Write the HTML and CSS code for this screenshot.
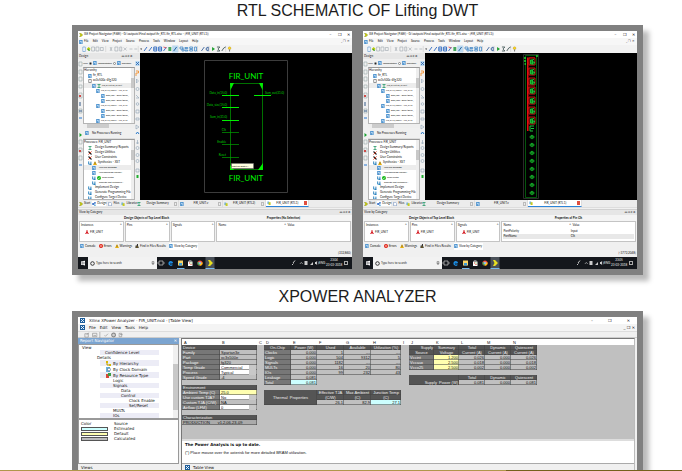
FILE: index.html
```html
<!DOCTYPE html>
<html lang="en">
<head>
<meta charset="utf-8">
<title>RTL Schematic of Lifting DWT</title>
<link rel="stylesheet" href="styles.css">
</head>
<body>
<svg class="defs" aria-hidden="true">
  <symbol id="doc" viewBox="0 0 4 4"><path d="M.3 0h3.200v4H.3z" fill="#2f7fc4"/><path d="M1 .7h1.800v1H1zM1.600 2.200h1.200v1.200H1.600z" fill="#dcefff"/></symbol>
  <symbol id="page" viewBox="0 0 4 4"><path d="M.6.3h2l1 1v2.500h-3z" fill="#fff" stroke="#5578b0" stroke-width=".5"/></symbol>
  <symbol id="net" viewBox="0 0 4 4"><path d="M1 2l2-1.200M1 2l2 1.300" stroke="#2858a8" stroke-width=".6"/><circle cx="1" cy="2" r=".9" fill="#2868c8"/><circle cx="3" cy=".9" r=".8" fill="#2868c8"/><circle cx="3" cy="3.200" r=".8" fill="#48a8d8"/></symbol>
  <symbol id="chip" viewBox="0 0 4 4"><path d="M.7.5h2.600v3H.7z" fill="#fff" stroke="#555" stroke-width=".6"/></symbol>
  <symbol id="sum" viewBox="0 0 4 4"><path d="M.5.5h3M.5 3.500h3M2 .5v3" stroke="#2a9a6a" stroke-width=".8"/></symbol>
  <symbol id="tool" viewBox="0 0 4 4"><path d="M.5.5l3 3" stroke="#222" stroke-width="1.100"/><path d="M3.500.5l-3 3" stroke="#d8442a"/></symbol>
  <symbol id="cycle" viewBox="0 0 4 4"><path d="M.7.4v2.800h2.200V.6M2 3.400h1.600" fill="none" stroke="#1878b8" stroke-width=".9"/></symbol>
  <symbol id="warn" viewBox="0 0 4 4"><path d="M2 0l2 4H0z" fill="#e8b010"/><path d="M2 1.200v1.500" stroke="#333" stroke-width=".6"/></symbol>
  <symbol id="ok" viewBox="0 0 4 4"><circle cx="2" cy="2" r="2" fill="#18b818"/><path d="M1 2l.8.8L3 1.200" stroke="#fff" stroke-width=".5" fill="none"/></symbol>
  <symbol id="err" viewBox="0 0 4 4"><circle cx="2" cy="2" r="2" fill="#e01c10"/><path d="M1.300 1.300l1.400 1.400M2.700 1.300L1.300 2.700" stroke="#fff" stroke-width=".6"/></symbol>
  <symbol id="arrow" viewBox="0 0 4 4"><path d="M.4.2h1.400L3.800 2 1.800 3.800H.4L1.600 2z" fill="#cdd000" stroke="#55600a" stroke-width=".3"/></symbol>
  <symbol id="red" viewBox="0 0 4 4"><path d="M1.400.2h1.200v1.600L3.900 4H2.800L2 2.900 1.200 4H.1l1.300-2.200z" fill="#d4141c"/></symbol>
  <symbol id="lib" viewBox="0 0 4 4"><path d="M.4.5h1.800v2.600H.4z" fill="#6ab0e0"/><path d="M1.600 1.200h2V4h-2z" fill="#c8cc20"/></symbol>
  <symbol id="find" viewBox="0 0 4 4"><path d="M.6 1.500h1.200L2 0h1v1.500l.8 2.500H.4z" fill="#333"/><path d="M1.500 2.500h1v1h-1z" fill="#e8b010"/></symbol>
  <symbol id="toolbar" viewBox="0 0 176 8" preserveAspectRatio="none">
    <path d="M14 2h3v4h-3zM18.500 2h3v4h-3zM23 2.500h3v3h-3zM33 2l2 4M35 2l-2 4M38 2h3v4h-3zM43 2h2v4h-2zM47 2.500l3 3M50 2.500l-3 3M53 4h3M58 4h3" fill="none" stroke="#9aa3ac" stroke-width=".6"/>
    <path d="M5 2h2.500v4.500H5z" fill="#fff" stroke="#5590cc" stroke-width=".6"/><path d="M9 4l2-2 2 2-2 2z" fill="#b8cc10"/><path d="M10 4l2 2" stroke="#189040"/>
    <path d="M28.500 1v6M62 1v6M103 1v6M123 1v6M135 1v6M152 1v6" stroke="#ccc" stroke-width=".6"/>
    <path d="M64 3.500h2l-1 1.500z" fill="#333"/>
    <path d="M71 2l-3 4M76 2l-3 4M78 2h3v4h-3zM78 4h3M83 2h3v4h-3zM83 4h3M91 2l-3 4" fill="none" stroke="#2866c0" stroke-width=".9"/><path d="M88 2l3 1" stroke="#d34" stroke-width=".8"/>
    <path d="M93 2h3v4h-3z" fill="#48a860"/><path d="M97 .5h6v7h-6z" fill="#bcd9f0"/><path d="M98.500 6l3-4" stroke="#2866a0"/>
    <path d="M105 2h3v2h-3zM107 4h2v2h-2zM110 2.500h3v1h-3zM110 5h3v1h-3zM115 2h3v1.500h-3zM115 4.500h3v1.500h-3zM120 2h2v4h-2z" fill="none" stroke="#2878c0" stroke-width=".7"/>
    <path d="M130 2l-3 4M132 3l2-1v4l-2-1z" stroke="#225090" fill="none" stroke-width=".8"/>
    <path d="M138 2l3 2-3 2z" fill="#20a030"/><path d="M143 2h3l-2 2 2 2h-3M148 6l2-3 2-1" fill="none" stroke="#304848" stroke-width=".8"/>
    <circle cx="156" cy="3.200" r="1.400" fill="#ffd820" stroke="#907010" stroke-width=".3"/><path d="M156 4.500v2" stroke="#777"/>
  </symbol>
  <symbol id="leftbar" viewBox="0 0 5 147">
    <g fill="none" stroke="#9aa" stroke-width=".6"><path d="M1 9h3v4H1zM1 17h3v4H1zM1 24h3v4H1zM1 32h3v3H1zM1 40h3v5H1zM1 56h3v4H1zM1 87h3v4H1zM1 95h3v4H1zM1 103h3v4H1z"/></g>
    <path d="M1 42h2v2H1zM1 97h2v2H1z" fill="#cf4b48"/><path d="M2 49v4M1 58h3" stroke="#345a88"/><path d="M1 65h3M1 112h3" stroke="#2676d0" stroke-width="1.200"/><path d="M1.500 80l2.500 2-2.500 2z" fill="#18a030"/>
  </symbol>
  <symbol id="midbar" viewBox="0 0 5 147">
    <path d="M1 2l3 3M4 2L1 5" stroke="#b54" stroke-width=".8"/><path d="M.3 8h4.400v5H.3z" fill="#bcd8ee"/><path d="M1 9l3 3M4 9l-3 3" stroke="#2060b0" stroke-width=".8"/>
    <path d="M1 18h2.500v2H1v3" fill="none" stroke="#f09030" stroke-width=".9"/>
    <g fill="none" stroke="#8aa0b4" stroke-width=".6"><path d="M1.500 26l2 2-2 2z"/><circle cx="2.500" cy="36" r="1.500"/><path d="M1 42l3 3M1 45h3"/><circle cx="2.500" cy="51" r="1.300"/><path d="M1 57h3v3H1zM1 65h3v2H1zM1 72l3 2-3 2zM2.500 87v4M1 90h3"/><circle cx="2.500" cy="95" r="1.500"/><circle cx="2.500" cy="102" r="1.500"/><circle cx="2.500" cy="108" r="1.500"/><path d="M1 116h3v3H1z"/></g>
    <path d="M1 81l1.500-2L4 81" stroke="#2878c8" fill="none"/><path d="M1.500 122h2v3h-2z" fill="#20b030"/>
  </symbol>
  <symbol id="taskicons" viewBox="0 0 60 12">
    <path d="M2 4h4v4H2z" fill="none" stroke="#ccc" stroke-width=".7"/><path d="M1 5v2M7 5v2" stroke="#ccc" stroke-width=".6"/>
    <path d="M15.500 6h-3.500a2 2 0 0 0 3.400 1.700M12 6a1.800 1.800 0 0 1 3.500 0" fill="none" stroke="#1c92ec" stroke-width="1.200"/>
    <path d="M21 3.500h5v5h-5z" fill="#f8d468"/><path d="M22 6h3v2.500h-3z" fill="#3a9ad8"/><path d="M20 11.500h7.500" stroke="#76b9ed"/>
    <path d="M31 4.500h4.500v4.500H31z" fill="#fff"/><path d="M32.200 4.500v-1h2v1" stroke="#ddd" fill="none" stroke-width=".5"/><path d="M32 5.500h1v1h-1zM33.500 7h1v1h-1z" fill="#e3402c"/><path d="M33.500 5.500h1v1h-1z" fill="#60b030"/>
    <circle cx="43" cy="6" r="2.600" fill="#ea4335"/><path d="M43 6l-2.300-1.200a2.600 2.600 0 0 0 2 3.800z" fill="#34a853"/><path d="M43 6l2.500-.8A2.600 2.600 0 0 1 42.700 8.600z" fill="#fbbc05"/><circle cx="43" cy="6" r="1.100" fill="#4285f4" stroke="#fff" stroke-width=".5"/>
    <path d="M48.500 0h9v12h-9z" fill="#4a5058"/><path d="M51 3h2l3 3-3 3h-2l1.500-3z" fill="#e8e020"/><path d="M48.500 11.500h9" stroke="#76b9ed"/>
  </symbol>
  <symbol id="tray" viewBox="0 0 28 12">
    <path d="M1 8l1.500-1.500M2 6l2-2.500" stroke="#ddd" stroke-width=".9"/><path d="M9 6.800l1.300-1.300 1.300 1.300" stroke="#ddd" stroke-width=".7" fill="none"/>
    <path d="M13.500 4h3v4h-3zM19 8l3-3v3zM24 5h1l1-1v4l-1-1h-1z" fill="#ccc"/><path d="M27 4.500q1 1.500 0 3" stroke="#ccc" stroke-width=".5" fill="none"/>
  </symbol>
  <symbol id="gate" viewBox="-3 -3 6 6"><circle r="1.800" fill="#063006" stroke="#0a8a1c" stroke-width=".7"/><path d="M-2.500 0H-1M.5 0h2M0-2v4M-1-1h1.500" stroke="#18c030" stroke-width=".9"/></symbol>
  <symbol id="cell" viewBox="0 0 9 10"><path d="M2 1h6v7H2z" fill="#0a1604" stroke="#e01010" stroke-width=".9"/><path d="M3.500 3h2v4h-2zM5.500 2.500h1.500M5.500 5h2v1.500M5 7h2" fill="#0a8f1e" stroke="#1cc83a" stroke-width=".9"/><path d="M0 2h2M0 6h2" stroke="#e01010" stroke-width=".7"/></symbol>
</svg>

<main class="slide">
  <h1>RTL SCHEMATIC OF Lifting DWT</h1>
  <section class="frame pair">

    <article class="nav">
      <header class="bar title"><svg class="ic"><use href="#arrow"/></svg><span>ISE Project Navigator (P.68f) - G:\outputs\Final output\fir_RTL\fir_RTL.xise - [FIR_UNIT (RTL1)]</span><span class="winbtns"><button>–</button><button>❐</button><button>✕</button></span></header>
      <nav class="bar menu"><svg class="ic"><use href="#doc"/></svg><a href="#">File</a><a href="#">Edit</a><a href="#">View</a><a href="#">Project</a><a href="#">Source</a><a href="#">Process</a><a href="#">Tools</a><a href="#">Window</a><a href="#">Layout</a><a href="#">Help</a><span class="mdi">_ ❐ ✕</span></nav>
      <div class="tools"><svg><use href="#toolbar"/></svg></div>
      <div class="work">
        <div class="side">
          <div class="phead"><span>Design</span><b>↔ □ ♯ ✕</b></div>
          <div class="cols">
            <svg class="strip"><use href="#leftbar"/></svg>
            <div class="panes">
              <div class="view"><span>View:</span><label><input type="radio" name="v1" checked><svg class="ic"><use href="#doc"/></svg>Implementation</label><label><input type="radio" name="v1"><svg class="ic"><use href="#doc"/></svg>Simulation</label></div>
              <div class="list tree">
                <ul>
                  <li>Hierarchy</li>
                  <li class="d1"><svg class="ic"><use href="#doc"/></svg>fir_RTL</li>
                  <li class="d1"><svg class="ic"><use href="#chip"/></svg>xc3s500e-4fg320</li>
                  <li class="d2 sel"><svg class="ic"><use href="#doc"/></svg><svg class="ic"><use href="#sum"/></svg>FIR_UNIT (FIR_UNIT.v)</li>
                  <li class="d3"><svg class="ic"><use href="#doc"/></svg>FIR_UNIT_LOOP1 - FIR_UNIT</li>
                  <li class="d4"><svg class="ic"><use href="#doc"/></svg>Data_reg1 - Delay (Delay_</li>
                  <li class="d4"><svg class="ic"><use href="#doc"/></svg>Data_reg2 - Delay (Delay_</li>
                  <li class="d3"><svg class="ic"><use href="#doc"/></svg>FIR_UNIT_LOOP1 - FIR_UNIT</li>
                  <li class="d4"><svg class="ic"><use href="#doc"/></svg>Data_reg1 - Delay (Delay_</li>
                  <li class="d4"><svg class="ic"><use href="#doc"/></svg>Data_reg2 - Delay (Delay_</li>
                  <li class="d3"><svg class="ic"><use href="#doc"/></svg>FIR_UNIT_LOOP1 - FIR_UNIT</li>
                </ul>
                <i class="vscroll"></i>
              </div>
              <div class="hscroll"><i></i></div>
              <div class="running"><svg class="ic"><use href="#doc"/></svg>No Processes Running</div>
              <div class="list procs">
                <ul>
                  <li>Processes: FIR_UNIT</li>
                  <li class="d1"><svg class="ic"><use href="#sum"/></svg><span>Design Summary/Reports</span></li>
                  <li class="d1"><svg class="ic"><use href="#tool"/></svg><span>Design Utilities</span></li>
                  <li class="d1"><svg class="ic"><use href="#tool"/></svg><span>User Constraints</span></li>
                  <li class="d1"><svg class="ic"><use href="#cycle"/></svg><svg class="ic"><use href="#warn"/></svg>Synthesize - XST</li>
                  <li class="d2 sel"><svg class="ic"><use href="#doc"/></svg><span>View RTL Schematic</span></li>
                  <li class="d2"><svg class="ic"><use href="#doc"/></svg><span>View Technology Schema...</span></li>
                  <li class="d2"><svg class="ic"><use href="#cycle"/></svg><svg class="ic"><use href="#ok"/></svg>Check Syntax</li>
                  <li class="d2"><svg class="ic"><use href="#cycle"/></svg><span>Generate Post-Synthesis S...</span></li>
                  <li class="d1"><svg class="ic"><use href="#cycle"/></svg><span>Implement Design</span></li>
                  <li class="d1"><svg class="ic"><use href="#cycle"/></svg><span>Generate Programming File</span></li>
                  <li class="d1"><svg class="ic"><use href="#cycle"/></svg><span>Configure Target Device</span></li>
                </ul>
                <i class="vscroll"></i>
              </div>
            </div>
            <svg class="strip"><use href="#midbar"/></svg>
          </div>
        </div>
        <svg class="canvas" viewBox="0 0 212 147">
          <path d="M64.500 7.500h83v132h-83z" fill="none" stroke="#3c3c3c"/>
          <g class="part"><text x="106" y="26">FIR_UNIT</text><text x="106" y="128">FIR_UNIT</text></g>
          <g fill="none" stroke="#00a000" stroke-width=".7"><path d="M90.500 30.500v86h32v-86zM82 79.500h17M82 91.500h17M82 104.500h17"/></g>
          <path d="M82 42.500h17M82 54.500h17M82 67.500h17M114 42.500h17" stroke="#00f000"/>
          <path d="M90 30h4l-3.500 7zM123 30h-4l3.500 7zM90 117v-5l4 5zM123 117v-7l-5 7z" fill="#00f000"/>
          <g class="pins"><text x="87" y="41">Data_in(15:0)</text><text x="87" y="53">Data_size(15:0)</text><text x="87" y="65">Sum_in(31:0)</text><text x="86" y="78">Clk</text><text x="86" y="90">Enable</text><text x="86" y="103">Reset</text><text class="out" x="125" y="41">Sum_out(31:0)</text></g>
          <path d="M91.500 110.500h22v5h-22z" fill="#ffffe1" stroke="#777" stroke-width=".5"/><text class="tip" x="92" y="114">Input Pin Reset x 1</text>
        </svg>
      </div>
      <div class="tabs four">
        <span class="left"><a href="#"><svg class="ic"><use href="#arrow"/></svg>Start</a><a href="#" class="on"><svg class="ic"><use href="#net"/></svg>Design</a><a href="#"><svg class="ic"><use href="#page"/></svg>Files</a><a href="#"><svg class="ic"><use href="#lib"/></svg>Libraries</a></span>
        <a href="#" class="tab"><svg class="ic"><use href="#sum"/></svg><span>Design Summary</span><i></i></a>
        <a href="#" class="tab"><svg class="ic"><use href="#doc"/></svg><span>FIR_UNIT.v</span><i></i></a>
        <a href="#" class="tab"><svg class="ic"><use href="#lib"/></svg><span>FIR_UNIT (RTL2)</span><i></i></a>
        <a href="#" class="tab on"><svg class="ic"><use href="#lib"/></svg><span>FIR_UNIT (RTL1)</span><i></i></a>
      </div>
      <div class="phead cat"><span>View by Category</span><b>↔ □ ♯ ✕</b></div>
      <div class="heads"><b>Design Objects of Top Level Block</b><b>Properties (No Selection)</b></div>
      <div class="boxes">
        <div class="box"><p>Instances<i>^</i></p><p class="obj"><svg class="ic"><use href="#red"/></svg>FIR_UNIT</p></div>
        <div class="box"><p>Pins<i>^</i></p></div>
        <div class="box"><p>Signals<i>^</i></p></div>
        <div class="box props"><p><span>Name</span><span>^ &nbsp;Value</span></p></div>
      </div>
      <div class="console"><a href="#"><svg class="ic"><use href="#doc"/></svg>Console</a><a href="#"><svg class="ic"><use href="#err"/></svg>Errors</a><a href="#"><svg class="ic"><use href="#warn"/></svg>Warnings</a><a href="#"><svg class="ic"><use href="#find"/></svg>Find in Files Results</a><a href="#" class="on"><svg class="ic"><use href="#doc"/></svg>View by Category</a></div>
      <div class="status">[332,860]</div>
      <footer class="task">
        <svg class="win" viewBox="0 0 10 12"><path d="M3 4.500l1.800-.4v1.700H3zM5.100 4.100L7 3.700v2.100H5.100zM3 6.200h1.800v1.900L3 7.700zM5.100 6.200H7v2.300l-1.900-.4z" fill="#fff"/></svg>
        <label class="search"><svg class="ic" viewBox="0 0 5 5"><circle cx="2.500" cy="2.500" r="1.800" fill="none" stroke="#111" stroke-width=".8"/></svg><input type="text" placeholder="Type here to search" aria-label="Search"><svg class="ic" viewBox="0 0 4 4"><path d="M1.300 0h1.400v2.500H1.300zM.5 2q1.500 2.500 3 0M2 3v1" fill="none" stroke="#555" stroke-width=".5"/></svg></label>
        <svg class="apps"><use href="#taskicons"/></svg>
        <svg class="tray"><use href="#tray"/></svg><span class="lang">ENG</span><span class="clock">23:04<br>23-03-2018</span><i class="note"></i>
      </footer>
    </article>

    <article class="nav">
      <header class="bar title"><svg class="ic"><use href="#arrow"/></svg><span>ISE Project Navigator (P.68f) - G:\outputs\Final output\fir_RTL\fir_RTL.xise - [FIR_UNIT (RTL1)]</span><span class="winbtns"><button>–</button><button>❐</button><button>✕</button></span></header>
      <nav class="bar menu"><svg class="ic"><use href="#doc"/></svg><a href="#">File</a><a href="#">Edit</a><a href="#">View</a><a href="#">Project</a><a href="#">Source</a><a href="#">Process</a><a href="#">Tools</a><a href="#">Window</a><a href="#">Layout</a><a href="#">Help</a><span class="mdi">_ ❐ ✕</span></nav>
      <div class="tools"><svg><use href="#toolbar"/></svg></div>
      <div class="work">
        <div class="side">
          <div class="phead"><span>Design</span><b>↔ □ ♯ ✕</b></div>
          <div class="cols">
            <svg class="strip"><use href="#leftbar"/></svg>
            <div class="panes">
              <div class="view"><span>View:</span><label><input type="radio" name="v2" checked><svg class="ic"><use href="#doc"/></svg>Implementation</label><label><input type="radio" name="v2"><svg class="ic"><use href="#doc"/></svg>Simulation</label></div>
              <div class="list tree">
                <ul>
                  <li>Hierarchy</li>
                  <li class="d1"><svg class="ic"><use href="#doc"/></svg>fir_RTL</li>
                  <li class="d1"><svg class="ic"><use href="#chip"/></svg>xc3s500e-4fg320</li>
                  <li class="d2 sel"><svg class="ic"><use href="#doc"/></svg><svg class="ic"><use href="#sum"/></svg>FIR_UNIT (FIR_UNIT.v)</li>
                  <li class="d3"><svg class="ic"><use href="#doc"/></svg>FIR_UNIT_LOOP1 - FIR_UNIT</li>
                  <li class="d4"><svg class="ic"><use href="#doc"/></svg>Data_reg1 - Delay (Delay_</li>
                  <li class="d4"><svg class="ic"><use href="#doc"/></svg>Data_reg2 - Delay (Delay_</li>
                  <li class="d3"><svg class="ic"><use href="#doc"/></svg>FIR_UNIT_LOOP1 - FIR_UNIT</li>
                  <li class="d4"><svg class="ic"><use href="#doc"/></svg>Data_reg1 - Delay (Delay_</li>
                  <li class="d4"><svg class="ic"><use href="#doc"/></svg>Data_reg2 - Delay (Delay_</li>
                  <li class="d3"><svg class="ic"><use href="#doc"/></svg>FIR_UNIT_LOOP1 - FIR_UNIT</li>
                </ul>
                <i class="vscroll"></i>
              </div>
              <div class="hscroll"><i></i></div>
              <div class="running"><svg class="ic"><use href="#doc"/></svg>No Processes Running</div>
              <div class="list procs">
                <ul>
                  <li>Processes: FIR_UNIT</li>
                  <li class="d1"><svg class="ic"><use href="#sum"/></svg><span>Design Summary/Reports</span></li>
                  <li class="d1"><svg class="ic"><use href="#tool"/></svg><span>Design Utilities</span></li>
                  <li class="d1"><svg class="ic"><use href="#tool"/></svg><span>User Constraints</span></li>
                  <li class="d1"><svg class="ic"><use href="#cycle"/></svg><svg class="ic"><use href="#warn"/></svg>Synthesize - XST</li>
                  <li class="d2 sel"><svg class="ic"><use href="#doc"/></svg><span>View RTL Schematic</span></li>
                  <li class="d2"><svg class="ic"><use href="#doc"/></svg><span>View Technology Schema...</span></li>
                  <li class="d2"><svg class="ic"><use href="#cycle"/></svg><svg class="ic"><use href="#ok"/></svg>Check Syntax</li>
                  <li class="d2"><svg class="ic"><use href="#cycle"/></svg><span>Generate Post-Synthesis S...</span></li>
                  <li class="d1"><svg class="ic"><use href="#cycle"/></svg><span>Implement Design</span></li>
                  <li class="d1"><svg class="ic"><use href="#cycle"/></svg><span>Generate Programming File</span></li>
                  <li class="d1"><svg class="ic"><use href="#cycle"/></svg><span>Configure Target Device</span></li>
                </ul>
                <i class="vscroll"></i>
              </div>
            </div>
            <svg class="strip"><use href="#midbar"/></svg>
          </div>
        </div>
        <svg class="canvas" viewBox="0 0 212 147">
          <path d="M98.500 1.500h15v144h-15z" fill="none" stroke="#2a2a2a"/>
          <path d="M100.500 2.500h11v142h-11z" fill="none" stroke="#067a10" stroke-width=".7"/>
          <path d="M102 6h2v72h-2z" fill="#7c0808"/><path d="M102.500 5v73M102 5h8" stroke="#f01010" stroke-width=".9"/>
          <g><use href="#cell" x="102" y="4" width="9" height="10"/><use href="#cell" x="102" y="14" width="9" height="10"/><use href="#cell" x="102" y="24" width="9" height="10"/><use href="#cell" x="102" y="33" width="9" height="10"/><use href="#cell" x="102" y="43" width="9" height="10"/><use href="#cell" x="102" y="53" width="9" height="10"/><use href="#cell" x="102" y="63" width="9" height="10"/></g>
          <path d="M105 73h4M105 73v5h3M106 75.500h3" fill="none" stroke="#1cc83a"/>
          <path d="M99 5h2M99 8h2M99.500 11h1.500M111 3h2" stroke="#20d830" stroke-width="1.400"/>
          <g><use href="#gate" x="104" y="81" width="6" height="6"/><use href="#gate" x="104" y="89" width="6" height="6"/><use href="#gate" x="104" y="97" width="6" height="6"/><use href="#gate" x="104" y="105" width="6" height="6"/><use href="#gate" x="104" y="113" width="6" height="6"/><use href="#gate" x="104" y="121" width="6" height="6"/><use href="#gate" x="104" y="129" width="6" height="6"/><use href="#gate" x="104" y="137" width="6" height="6"/></g>
        </svg>
      </div>
      <div class="tabs three">
        <span class="left"><a href="#"><svg class="ic"><use href="#arrow"/></svg>Start</a><a href="#" class="on"><svg class="ic"><use href="#net"/></svg>Design</a><a href="#"><svg class="ic"><use href="#page"/></svg>Files</a><a href="#"><svg class="ic"><use href="#lib"/></svg>Libraries</a></span>
        <a href="#" class="tab"><svg class="ic"><use href="#sum"/></svg><span>Design Summary</span><i></i></a>
        <a href="#" class="tab"><svg class="ic"><use href="#doc"/></svg><span>FIR_UNIT.v</span><i></i></a>
        <a href="#" class="tab on"><svg class="ic"><use href="#lib"/></svg><span>FIR_UNIT (RTL1)</span><i></i></a>
      </div>
      <div class="phead cat"><span>View by Category</span><b>↔ □ ♯ ✕</b></div>
      <div class="heads"><b>Design Objects of Top Level Block</b><b>Properties of Pin Clk</b></div>
      <div class="boxes">
        <div class="box"><p>Instances<i>^</i></p><p class="obj"><svg class="ic"><use href="#red"/></svg>FIR_UNIT</p></div>
        <div class="box"><p>Pins<i>^</i></p><p class="obj"><svg class="ic"><use href="#red"/></svg>FIR_UNIT</p></div>
        <div class="box"><p>Signals<i>^</i></p><p class="obj"><svg class="ic"><use href="#red"/></svg>FIR_UNIT</p></div>
        <div class="box props"><p><span>Name</span><span>^ &nbsp;Value</span></p><p class="row"><span>PortPolarity</span><span class="val">Input</span></p><p class="row alt"><span>PortName</span><span class="val">Clk</span></p></div>
      </div>
      <div class="console"><a href="#"><svg class="ic"><use href="#doc"/></svg>Console</a><a href="#"><svg class="ic"><use href="#err"/></svg>Errors</a><a href="#"><svg class="ic"><use href="#warn"/></svg>Warnings</a><a href="#"><svg class="ic"><use href="#find"/></svg>Find in Files Results</a><a href="#" class="on"><svg class="ic"><use href="#doc"/></svg>View by Category</a></div>
      <div class="status">[-3772,2048]</div>
      <footer class="task">
        <svg class="win" viewBox="0 0 10 12"><path d="M3 4.500l1.800-.4v1.700H3zM5.100 4.100L7 3.700v2.100H5.100zM3 6.200h1.800v1.900L3 7.700zM5.100 6.200H7v2.300l-1.900-.4z" fill="#fff"/></svg>
        <label class="search"><svg class="ic" viewBox="0 0 5 5"><circle cx="2.500" cy="2.500" r="1.800" fill="none" stroke="#111" stroke-width=".8"/></svg><input type="text" placeholder="Type here to search" aria-label="Search"><svg class="ic" viewBox="0 0 4 4"><path d="M1.300 0h1.400v2.500H1.300zM.5 2q1.500 2.500 3 0M2 3v1" fill="none" stroke="#555" stroke-width=".5"/></svg></label>
        <svg class="apps"><use href="#taskicons"/></svg>
        <svg class="tray"><use href="#tray"/></svg><span class="lang">ENG</span><span class="clock">23:05<br>23-03-2018</span><i class="note"></i>
      </footer>
    </article>
  </section>

  <h1>XPOWER ANALYZER</h1>
  <section class="frame power">
    <article class="xp">
      <header class="xtitle"><svg class="xic" viewBox="0 0 5 5"><path d="M0 0h5v5H0z" fill="#1d5d9a"/><path d="M1 1l3 3M4 1L1 4" stroke="#e6f2ff"/></svg><span>Xilinx XPower Analyzer - FIR_UNIT.ncd - [Table View]</span><span class="xbtns"><button>–</button><button>❐</button><button>✕</button></span></header>
      <nav class="xmenu"><svg class="xic" viewBox="0 0 5 5"><path d="M0 0h5v5H0z" fill="#1d5d9a"/><path d="M1 1l3 3M4 1L1 4" stroke="#e6f2ff"/></svg><a href="#">File</a><a href="#">Edit</a><a href="#">View</a><a href="#">Tools</a><a href="#">Help</a><span class="mdi">_ ❐ ✕</span></nav>
      <div class="xtools"><svg viewBox="0 0 60 7"><g fill="none" stroke="#888" stroke-width=".7"><path d="M3 2h4v4H3zM5 3l3-2M12 1.500h5v4h-5zM13 4h3M20.500 0v7M26 4l1 1 3-3M43 1.500h3v4h-3zM44 3h3"/><circle cx="36.500" cy="3.500" r="2.200" stroke-width="1.200"/><path d="M34 3.500h5"/></g></svg></div>
      <div class="xbody">
        <aside>
          <h2>Report Navigator<b>✕</b></h2>
          <div class="xtree">
            <ul>
              <li>View</li>
              <li class="t2 odd">Confidence Level</li>
              <li class="t1">Details</li>
              <li class="t3 odd"><svg class="xic" viewBox="0 0 5 5"><path d="M0 0h2v2H0zM3 3h2v2H3z" fill="#d8b800"/><path d="M1 2v2h2" fill="none" stroke="#b89600"/></svg>By Hierarchy</li>
              <li class="t3"><svg class="xic" viewBox="0 0 5 5"><path d="M0 0h4v5H0z" fill="#68b2e0"/><circle cx="3" cy="2.500" r="1.500" fill="#fff" stroke="#246" stroke-width=".5"/></svg>By Clock Domain</li>
              <li class="t3 odd"><svg class="xic" viewBox="0 0 5 5"><path d="M0 1h3v4H0z" fill="#d84838"/><path d="M2 0h3v3H2z" fill="#3aa048"/></svg>By Resource Type</li>
              <li class="t4">Logic</li>
              <li class="t4 odd">Signals</li>
              <li class="t5">Data</li>
              <li class="t5 odd">Control</li>
              <li class="t6">Clock Enable</li>
              <li class="t6 odd">Set/Reset</li>
              <li class="t4">MULTs</li>
              <li class="t4 odd">IOs</li>
            </ul>
            <i class="xscroll"></i>
          </div>
          <div class="legend">
            <p><span>Color</span><span>Source</span></p>
            <p><i class="cyan"></i>Estimated</p>
            <p><i class="yel"></i>Default</p>
            <p><i class="gry"></i>Calculated</p>
          </div>
          <div class="foot">Views</div>
        </aside>
        <section class="sheet">
          <table>
            <colgroup><col class="w38"><col class="w37"><col class="w7"><col class="w27"><col class="w26"><col class="w27"><col class="w27"><col class="w30"><col class="w8"><col class="w25"><col class="w25"><col class="w26"><col class="w26"><col class="w26"><col></colgroup>
            <thead><tr><th>A</th><th>B</th><th>C</th><th>D</th><th>E</th><th>F</th><th>G</th><th>H</th><th>I</th><th>J</th><th>K</th><th>L</th><th>M</th><th>N</th><th></th></tr></thead>
            <tbody>
              <tr><td class="h" colspan="2">Device</td><td></td><td class="h c">On-Chip</td><td class="h c">Power (W)</td><td class="h c">Used</td><td class="h c">Available</td><td class="h c">Utilization (%)</td><td></td><td class="h r">Supply</td><td class="h c">Summary</td><td class="h c">Total</td><td class="h c">Dynamic</td><td class="h c">Quiescent</td><td></td></tr>
              <tr><td class="k">Family</td><td class="v">Spartan3e</td><td></td><td class="k">Clocks</td><td class="v n">0.000</td><td class="v n">1</td><td class="v n">---</td><td class="v n">---</td><td></td><td class="h c">Source</td><td class="h c">Voltage</td><td class="h c">Current (A)</td><td class="h c">Current (A)</td><td class="h c">Current (A)</td><td></td></tr>
              <tr><td class="k">Part</td><td class="v">xc3s500e</td><td></td><td class="k">Logic</td><td class="v n">0.000</td><td class="v n">504</td><td class="v n">9312</td><td class="v n">5</td><td></td><td class="k">Vccint</td><td class="v n y">1.200</td><td class="v n">0.026</td><td class="v n">0.000</td><td class="v n">0.026</td><td></td></tr>
              <tr><td class="k">Package</td><td class="v">fg320</td><td></td><td class="k">Signals</td><td class="v n">0.000</td><td class="v n">1182</td><td class="v n">---</td><td class="v n">---</td><td></td><td class="k">Vccaux</td><td class="v n y">2.500</td><td class="v n">0.018</td><td class="v n">0.000</td><td class="v n">0.018</td><td></td></tr>
              <tr><td class="k">Temp Grade</td><td class="v w"><select aria-label="Temp Grade"><option>Commercial</option></select></td><td></td><td class="k">MULTs</td><td class="v n">0.000</td><td class="v n">16</td><td class="v n">20</td><td class="v n">80</td><td></td><td class="k">Vcco25</td><td class="v n y">2.500</td><td class="v n">0.002</td><td class="v n">0.000</td><td class="v n">0.002</td><td></td></tr>
              <tr><td class="k">Process</td><td class="v w"><select aria-label="Process"><option>Typical</option></select></td><td></td><td class="k">IOs</td><td class="v n">0.000</td><td class="v n">99</td><td class="v n">232</td><td class="v n">43</td><td colspan="7"></td></tr>
              <tr><td class="k">Speed Grade</td><td class="v">-4</td><td></td><td class="k">Leakage</td><td class="v n">0.081</td><td colspan="4"></td><td class="h r" colspan="2" rowspan="2"><br>Supply &nbsp;Power (W)</td><td class="h c">Total</td><td class="h c">Dynamic</td><td class="h c">Quiescent</td><td></td></tr>
              <tr><td colspan="3"></td><td class="k">Total</td><td class="v n cy">0.081</td><td colspan="4"></td><td class="v n">0.081</td><td class="v n">0.000</td><td class="v n">0.081</td><td></td></tr>
              <tr><td class="h" colspan="2">Environment</td><td colspan="13"></td></tr>
              <tr><td class="k">Ambient Temp (C)</td><td class="v y"><input type="text" value="25.0" aria-label="Ambient Temp"></td><td></td><td class="h c" colspan="2" rowspan="3">Thermal &nbsp;Properties</td><td class="h c">Effective TJA</td><td class="h c">Max Ambient</td><td class="h c">Junction Temp</td><td colspan="7"></td></tr>
              <tr><td class="k">Use custom TJA?</td><td class="v w"><select aria-label="Use custom TJA"><option>No</option></select></td><td></td><td class="h c">(C/W)</td><td class="h c">(C)</td><td class="h c">(C)</td><td colspan="7"></td></tr>
              <tr><td class="k">Custom TJA (C/W)</td><td class="v">NA</td><td></td><td class="v n">26.1</td><td class="v n">82.9</td><td class="v n cy">27.1</td><td colspan="7"></td></tr>
              <tr><td class="k">Airflow (LFM)</td><td class="v w"><select aria-label="Airflow"><option>0</option></select></td><td colspan="13"></td></tr>
              <tr><td colspan="15"></td></tr>
              <tr><td class="h" colspan="2">Characterization</td><td colspan="13"></td></tr>
              <tr><td class="v g" colspan="2">PRODUCTION &nbsp; &nbsp; &nbsp; v1.2,06-23-09</td><td colspan="13"></td></tr>
            </tbody>
          </table>
          <div class="grey"></div>
          <div class="note2"><b>The Power Analysis is up to date.</b><p>(*) Place mouse over the asterisk for more detailed BRAM utilization.</p></div>
          <div class="foot"><svg class="xic" viewBox="0 0 5 5"><path d="M0 0h5v5H0z" fill="#1d5d9a"/><path d="M1 1l3 3M4 1L1 4" stroke="#e6f2ff"/></svg>Table View</div>
        </section>
      </div>
    </article>
  </section>
</main>
<div class="rule"></div>
</body>
</html>
```
FILE: styles.css
```css
* { box-sizing: border-box; }
html, body { height: 100%; }
body { margin: 0; background: #fff; color: #111; display: flex; flex-direction: column; overflow: hidden; font: 3px/5px Lato, "Liberation Sans", Arial, sans-serif; }
.defs { position: absolute; width: 0; height: 0; }
h1, h2, p, ul { margin: 0; padding: 0; font-weight: normal; list-style: none; }
a { color: inherit; text-decoration: none; }
button, input, select { font: inherit; color: inherit; border: 0; background: none; padding: 0; margin: 0; appearance: none; border-radius: 0; }
i { font-style: normal; }
.slide { flex: 1; min-height: 0; margin: 0 39px 0 72px; display: flex; flex-direction: column; }
h1 { font: 16px/20px "Liberation Sans", Arial, sans-serif; text-align: center; height: 25px; padding-top: 1px; flex: none; color: #1c1c1c; }
.frame + h1 { height: 36px; padding-top: 12px; }
.frame { background: #808080; padding: 6px; box-shadow: 6px 6px 5px #bbb; }
.pair { display: grid; grid-template-columns: 1fr 1fr; gap: 11px; }
.ic { width: 4px; height: 4px; flex: none; }

.nav { background: #f0f0f0; display: flex; flex-direction: column; min-width: 0; overflow: hidden; }
.bar { display: flex; align-items: center; white-space: nowrap; padding: 0 2px 0 1px; }
.title { height: 7px; background: #fff; gap: 1px; }
.winbtns { margin-left: auto; display: flex; gap: 6px; font-size: 4px; }
.winbtns button { width: 3px; }
.menu { height: 7px; gap: 4px; background: #f7f7f7; }
.menu .ic + a { margin-left: -3px; }
.mdi { margin-left: auto; }
.tools { height: 8px; background: #f2f2f2; }
.tools svg { display: block; width: 171px; height: 8px; }
.work { display: flex; background: #000; height: 147px; }
.side { width: 62px; flex: none; background: #f0f0f0; }
.phead { display: flex; justify-content: space-between; align-items: center; height: 6px; background: #e6e6e6; padding: 0 7px 0 1px; }
.cols { display: flex; height: 141px; overflow: hidden; }
.strip { width: 5px; height: 147px; flex: none; margin-top: -6px; }
.panes { flex: 1; min-width: 0; }
.view, .view label { display: flex; align-items: center; gap: 1px; }
.view { height: 8px; white-space: nowrap; font-size: 2px; color: #000; }
.view input { width: 3px; height: 3px; border: 1px solid #888; border-radius: 50%; background: #fff; flex: none; }
.view input:checked { background: #222; }
.list { display: flex; background: #fff; border: 1px solid #b4b4b4; border-top-color: #999; overflow: hidden; }
.list ul { flex: 1; min-width: 0; }
.tree { height: 57px; }
.list li { height: 5px; line-height: 5px; display: flex; align-items: center; gap: 1px; white-space: nowrap; }
.sel { background: #ececec; }
.d1 { padding-left: 4px; }
.d2 { padding-left: 8px; }
.tree .d2, .tree .d3, .tree .d4 { font-size: 2px; color: #000; }
.d3 { padding-left: 12px; }
.d4 { padding-left: 17px; }
.procs .d2 { font-size: 2px; color: #000; }
.procs .ic + span { padding-left: 2px; }
.vscroll { width: 3px; background: linear-gradient(#eee 10px, #c8c8c8 10px, #c8c8c8 20px, #eee 20px); }
.hscroll { height: 4px; background: #eee; padding: 0 25px 0 4px; }
.hscroll i { display: block; width: 22px; height: 4px; background: #ccc; }
.running { height: 11px; display: flex; align-items: center; gap: 3px; padding-left: 2px; border-bottom: 1px solid #ddd; }
.procs { height: 61px; }
.canvas { flex: 1; min-width: 0; height: 147px; display: block; }
.part { font-size: 8px; fill: #00f000; text-anchor: middle; }
.pins { font-size: 3px; fill: #00d000; text-anchor: end; }
.pins .out { text-anchor: start; }
.tip { font-size: 2px; fill: #000; }

.tabs { display: flex; height: 8px; align-items: center; padding-right: 43px; border-bottom: 1px solid #ddd; background: #ececec; }
.tabs.three { padding-right: 55px; }
.left { width: 58px; flex: none; display: flex; gap: 2px; padding-left: 1px; white-space: nowrap; }
.left a { display: flex; align-items: center; gap: 1px; }
.left .on, .console .on { background: #fff; }
.tab { flex: 1; display: flex; align-items: center; justify-content: space-between; height: 7px; padding: 0 1px; white-space: nowrap; border-right: 1px solid #ddd; }
.tab i { width: 3px; height: 4px; border: 1px solid #bbb; }
.tab.on { background: #fff; border-bottom: 1px solid #2c84d8; }
.tab.on i { background: #e05040; border-color: #e05040; }
.cat { margin-top: 1px; padding-right: 1px; border-top: 1px solid #d0d0d0; }
.heads { display: flex; height: 6px; align-items: center; text-align: center; background: #f4f4f4; }
.heads b { flex: 1; }
.boxes { display: grid; grid-template-columns: 1fr 1fr 1fr 3fr; gap: 1px; height: 21px; padding: 0 1px; }
.box { background: #fff; border: 1px solid #c4c4c4; padding: 1px 1px 0; overflow: hidden; }
.box p { display: flex; justify-content: space-between; height: 6px; }
.box .obj { justify-content: flex-start; align-items: center; gap: 1px; padding-left: 4px; }
.props p span { flex: 1; }
.props p span:last-child { padding-left: 1px; }
.props .row { height: 5px; }
.props p .val:last-child { padding-left: 4px; }
.alt { background: #e8e8e8; }
.console { display: flex; height: 8px; align-items: center; gap: 2px; padding-left: 2px; }
.console a { display: flex; align-items: center; gap: 1px; height: 7px; padding-right: 1px; }
.status { height: 7px; text-align: right; padding-right: 1px; line-height: 7px; }
.task { display: flex; align-items: center; height: 12px; background: #14171c; color: #eee; }
.win { width: 10px; height: 12px; flex: none; }
.search { width: 69px; height: 12px; flex: none; background: #f2f2f2; color: #333; display: flex; align-items: center; padding: 0 2px; gap: 1px; }
.search .ic:first-child { width: 5px; height: 5px; }
.search input { flex: 1; min-width: 0; font-size: 3px; height: 6px; }
.search input::placeholder { color: #222; opacity: 1; }
.apps { width: 60px; height: 12px; flex: none; }
.tray { width: 28px; height: 12px; margin-left: auto; flex: none; }
.lang { width: 7px; }
.clock { width: 16px; text-align: center; line-height: 5px; white-space: nowrap; }
.note { width: 4px; height: 4px; border: 1px solid #aaa; margin: 0 4px 0 2px; }

.power { flex: 1; min-height: 0; padding-bottom: 0; }
.xp { height: 100%; background: #f0f0f0; display: flex; flex-direction: column; overflow: hidden; font: 4px/5px "DejaVu Sans", Verdana, sans-serif; color: #111; }
.xic { width: 5px; height: 5px; flex: none; }
.xtitle, .xmenu { display: flex; align-items: center; padding: 0 2px; gap: 4px; white-space: nowrap; }
.xtitle { height: 7px; background: #fff; }
.xmenu { height: 7px; background: #f4f4f4; }
.xbtns { margin-left: auto; display: flex; gap: 15px; padding-right: 5px; }
.xtools { height: 7px; border-top: 1px solid #ddd; border-bottom: 1px solid #ccc; }
.xtools svg { display: block; width: 60px; height: 6px; }
.xbody { flex: 1; min-height: 0; display: flex; gap: 2px; }
aside { width: 101px; flex: none; display: flex; flex-direction: column; }
h2 { display: flex; justify-content: space-between; height: 6px; padding: 0 2px; background: #7ba4d0; color: #fff; font: inherit; }
.xtree { display: flex; background: #fff; border: 1px solid #999; height: 75px; }
.xtree ul { flex: 1; padding-left: 3px; }
.xtree li { display: flex; align-items: center; gap: 1px; height: 5px; margin-right: 14px; white-space: nowrap; }
.xtree .t3 { height: 6px; gap: 2px; }
.odd { background: linear-gradient(90deg, transparent 18px, #ececf6 18px); }
.t1 { padding-left: 15px; }
.t2 { padding-left: 23px; }
.t3 { padding-left: 24px; }
.t4 { padding-left: 31px; }
.t5 { padding-left: 39px; }
.t6 { padding-left: 47px; }
.xscroll { width: 5px; background: linear-gradient(#f0f0f0 19px, #c8c8c8 19px, #c8c8c8 65px, #f0f0f0 65px); }
.legend { flex: 1; background: #fff; border: 1px solid #999; padding: 1px 2px; }
.legend p { display: flex; align-items: center; gap: 6px; height: 5px; }
.legend p span { width: 27px; }
.legend i { width: 27px; height: 4px; border: 1px solid #555; }
.cyan, .cy { background: #cff; }
.yel, .y { background: #ffffb0; }
.gry { background: #bbb; }
.foot { height: 6px; flex: none; display: flex; align-items: center; gap: 3px; padding-left: 3px; }
.sheet { flex: 1; min-width: 0; display: flex; flex-direction: column; margin-right: 2px; border-left: 1px solid #777; border-top: 1px solid #777; border-right: 1px solid #bbb; }
table { width: 100%; table-layout: fixed; border-collapse: collapse; background: #c0c0c0; font: 4px/5px "Liberation Sans", Arial, sans-serif; }
.w7 { width: 7px; } .w8 { width: 8px; } .w25 { width: 25px; } .w26 { width: 26px; } .w27 { width: 27px; }
.w30 { width: 30px; } .w37 { width: 37px; } .w38 { width: 38px; }
th { background: #fff; font-weight: normal; text-align: left; height: 6px; padding: 0 2px; }
td { height: 5px; padding: 0 1px; line-height: 5px; white-space: nowrap; }
.h, .k, .v { box-shadow: inset 0 -1px #4448, inset -1px 0 #4448; }
.h { background: #555; color: #eee; }
.k { background: #777; color: #f4f4f4; }
.c { text-align: center; }
.r, .n { text-align: right; }
.v.y { background: #ffffb0; }
.v.cy { background: #cff; }
.v.w { background: #fff; }
.g { background: #aaa; }
td input, td select { display: block; width: 100%; height: 5px; line-height: 5px; }
td select { background: linear-gradient(90deg, transparent 28px, #c8c8c8 28px); }
.grey { flex: 1; background: #c0c0c0; }
.note2 { height: 25px; background: #fff; border-top: 2px solid #ddd; border-bottom: 1px solid #aaa; padding: 1px 3px; font-family: "Liberation Sans", Arial, sans-serif; }
.note2 b { display: block; font: bold 4px/6px "DejaVu Sans", sans-serif; }
.note2 p { padding-top: 2px; }
.rule { height: 1px; flex: none; background: linear-gradient(90deg, #b0964a 506px, #75611c 506px); }
```
